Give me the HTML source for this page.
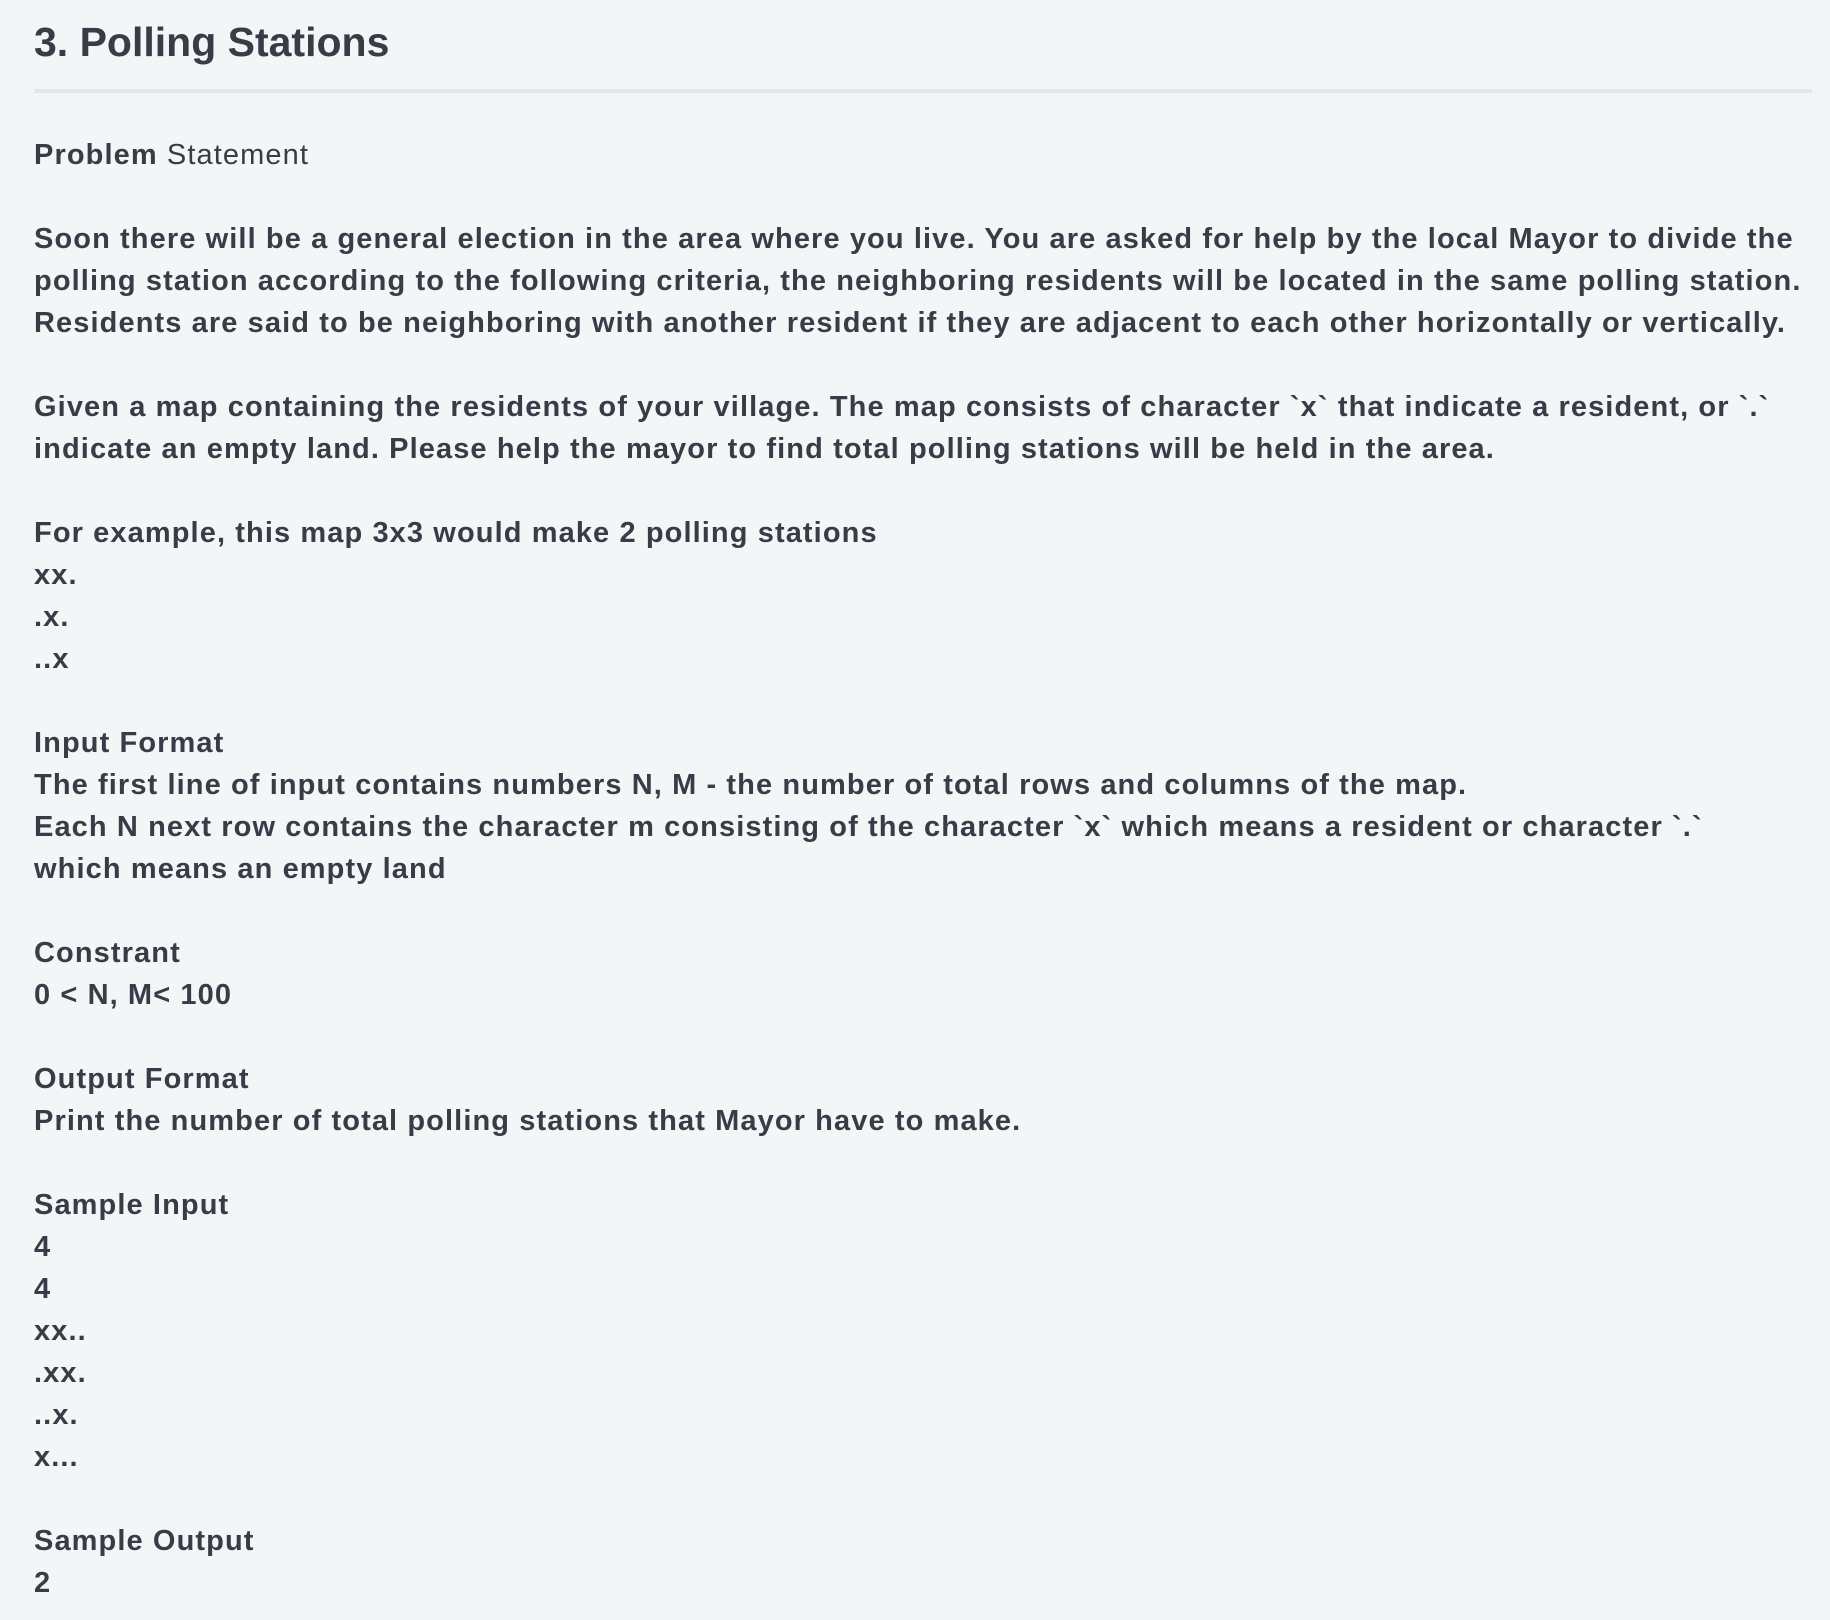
<!DOCTYPE html>
<html><head><meta charset="utf-8"><style>
html,body{margin:0;padding:0;}
body{width:1830px;height:1620px;background:#f3f6f7;color:#373c47;font-family:"Liberation Sans",Arial,sans-serif;position:relative;overflow:hidden;}
h1{position:absolute;left:34px;top:14px;margin:0;font-size:41px;font-weight:bold;line-height:56px;color:#373c47;}
.hr{position:absolute;left:34px;top:89px;width:1778px;height:4px;background:#e3e7e9;}
.c{position:absolute;left:34px;top:134px;font-size:29px;letter-spacing:1.1px;font-weight:bold;line-height:42px;white-space:pre;}
.n{font-weight:normal;}
</style></head><body>
<h1>3. Polling Stations</h1>
<div class="hr"></div>
<div class="c">Problem <span class="n">Statement</span>

Soon there will be a general election in the area where you live. You are asked for help by the local Mayor to divide the
polling station according to the following criteria, the neighboring residents will be located in the same polling station.
Residents are said to be neighboring with another resident if they are adjacent to each other horizontally or vertically.

Given a map containing the residents of your village. The map consists of character `x` that indicate a resident, or `.`
indicate an empty land. Please help the mayor to find total polling stations will be held in the area.

For example, this map 3x3 would make 2 polling stations
xx.
.x.
..x

Input Format
The first line of input contains numbers N, M - the number of total rows and columns of the map.
Each N next row contains the character m consisting of the character `x` which means a resident or character `.`
which means an empty land

Constrant
0 &lt; N, M&lt; 100

Output Format
Print the number of total polling stations that Mayor have to make.

Sample Input
4
4
xx..
.xx.
..x.
x...

Sample Output
2</div>
</body></html>
